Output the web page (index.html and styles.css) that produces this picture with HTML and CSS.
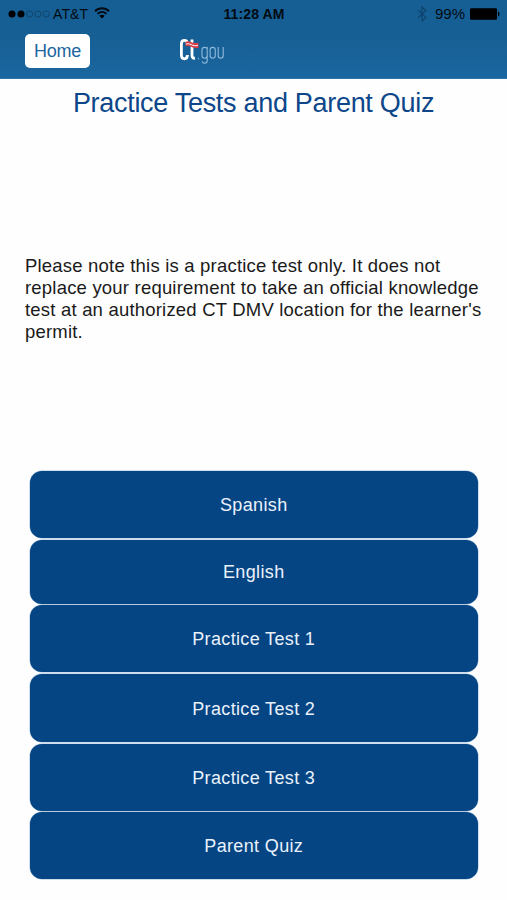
FILE: index.html
```html
<!DOCTYPE html>
<html lang="en">
<head>
    <meta charset="UTF-8">
    <title>Practice Tests and Parent Quiz</title>
    <link rel="stylesheet" href="styles.css">
</head>
<body>
    <header class="header">
        <div class="status-bar">
            <div class="status-left">
                <svg class="signal" width="42" height="10" viewBox="0 0 42 10">
                    <circle cx="4" cy="5" r="3.5"/>
                    <circle cx="13" cy="5" r="3.5"/>
                    <circle class="empty" cx="21.7" cy="5" r="3.1"/>
                    <circle class="empty" cx="30" cy="5" r="3.1"/>
                    <circle class="empty" cx="38.2" cy="5" r="3.1"/>
                </svg>
                <span class="carrier">AT&amp;T</span>
                <svg class="wifi" width="16" height="12" viewBox="0 0 16 12">
                    <path class="arc" d="M1 4.2C5 0.3 11 0.3 15 4.2"/>
                    <path class="arc" d="M3.5 6.9C6.2 4.4 9.8 4.4 12.5 6.9"/>
                    <path d="M5.3 8.8C6.9 7.4 9.1 7.4 10.7 8.8L8 11.6Z"/>
                </svg>
            </div>
            <span class="time">11:28 AM</span>
            <div class="status-right">
                <svg class="bluetooth" width="10" height="16" viewBox="0 0 10 16">
                    <path d="M1 4.2L9 11.4L5 15V1L9 4.6L1 11.8"/>
                </svg>
                <span class="percent">99%</span>
                <svg class="battery" width="30" height="12" viewBox="0 0 30 12">
                    <rect x="0" y="0.3" width="27" height="11.4" rx="1.2"/>
                    <path d="M28 3.6C30 4.2 30 7.8 28 8.4Z"/>
                </svg>
            </div>
        </div>
        <div class="nav">
            <button class="home">Home</button>
            <svg class="logo" width="48" height="30" viewBox="0 0 48 30">
                <path class="logo-bold" d="M8.4 9V7Q8.4 3.3 5.4 3.3Q2.4 3.3 2.4 7V18Q2.4 21.8 5.4 21.8Q8.4 21.8 8.4 18"/>
                <path class="logo-bold" d="M13 2.5V18.3Q13 21.5 16 21.2"/>
                <path class="flag" d="M6.5 4.8C10.5 2.4 13.5 7.8 19.5 5.5V11C13.5 12.5 10.5 7.5 6.5 9.6Z"/>
                <path class="stripe" d="M7 7.2C10.5 5.2 13.5 10.2 19 8.3"/>
                <path class="logo-thin" d="M19.5 21V22.2M28.2 12.2Q27.8 10.4 25.6 10.4Q23 10.4 23 13V18.5Q23 21.2 25.6 21.2Q28.2 21.2 28.2 18.5M28.2 10V23.5Q28.2 26.2 25.6 26.2Q23.6 26.2 23.2 24.5"/>
                <rect class="logo-thin" x="31.1" y="10.4" width="5.2" height="10.8" rx="2.6"/>
                <path class="logo-thin" d="M39.2 10V18.5Q39.2 21.2 41.7 21.2Q44.2 21.2 44.2 18.5V10"/>
            </svg>
        </div>
    </header>

    <main class="content">
        <h1 class="title">Practice Tests and Parent Quiz</h1>
        <p class="note">
            Please note this is a practice test only. It does not<br>
            replace your requirement to take an official knowledge<br>
            test at an authorized CT DMV location for the learner's<br>
            permit.
        </p>
        <div class="menu">
            <button class="menu-button">Spanish</button>
            <button class="menu-button">English</button>
            <button class="menu-button">Practice Test 1</button>
            <button class="menu-button">Practice Test 2</button>
            <button class="menu-button">Practice Test 3</button>
            <button class="menu-button">Parent Quiz</button>
        </div>
    </main>
</body>
</html>
```
FILE: styles.css
```css
* {
    box-sizing: border-box;
}
body {
    margin: 0;
    height: 900px;
    overflow: hidden;
    background-color: #fefefe;
    font-family: "Liberation Sans", Arial, sans-serif;
}
button {
    padding: 0;
    border: none;
    font-family: inherit;
}
.header {
    height: 79px;
    background: linear-gradient(#165f94 45%, #1b669f);
    border-bottom: 1px solid #2d74a8;
}
.status-bar {
    display: grid;
    grid-template-columns: 1fr auto 1fr;
    align-items: center;
    height: 28px;
    padding: 0 7px 0 8px;
    color: #020a12;
    font-size: 14px;
}
.status-left,
.status-right {
    display: flex;
    align-items: center;
}
.status-right {
    justify-content: flex-end;
}
.signal .empty {
    fill: none;
    stroke: #0c3f66;
    stroke-width: 0.8;
}
.carrier {
    margin-left: 3px;
    letter-spacing: 0.1px;
}
.wifi {
    margin: 0 0 2px 6px;
}
.wifi .arc {
    fill: none;
    stroke: #020a12;
    stroke-width: 1.9;
}
.time {
    font-weight: bold;
    letter-spacing: 0.1px;
}
.bluetooth {
    fill: none;
    stroke: #0d4169;
    stroke-width: 1.1;
}
.percent {
    margin: 0 5px 0 8px;
    font-size: 15px;
    line-height: 16px;
    padding-bottom: 1px;
}
.nav {
    display: flex;
    align-items: flex-start;
    padding: 6px 0 0 25px;
}
.home {
    width: 65px;
    height: 34px;
    padding-top: 1px;
    border-radius: 5px;
    background-color: #fff;
    color: #1b669f;
    font-size: 18px;
    letter-spacing: -0.3px;
}
.logo {
    margin: 3px 0 0 89px;
}
.logo-bold {
    fill: none;
    stroke: #fff;
    stroke-width: 2.8;
}
.logo-thin {
    fill: none;
    stroke: #8fb9da;
    stroke-width: 1.1;
}
.flag {
    fill: #d43f48;
}
.stripe {
    fill: none;
    stroke: #fff;
    stroke-width: 1;
}
.content {
    display: flex;
    flex-direction: column;
}
.title {
    height: 48px;
    margin: 0;
    color: #0d478a;
    font-size: 27px;
    font-weight: normal;
    letter-spacing: -0.3px;
    line-height: 49px;
    text-align: center;
}
.note {
    height: 216px;
    margin: 128px 0 0 25px;
    color: #1a1a1a;
    font-size: 18.5px;
    letter-spacing: 0.2px;
    line-height: 22px;
    white-space: nowrap;
}
.menu {
    display: grid;
    grid-template-rows: 67px 64px 67px 68px 67px 67px;
    gap: 1.7px;
    margin: 0 29.5px 0 30px;
}
.menu-button {
    padding-top: 2px;
    border-radius: 12px;
    background-color: #064583;
    box-shadow: 0 0 0 0.5px #9dbbd8;
    color: #e9f2fc;
    font-size: 18px;
    letter-spacing: 0.35px;
}
```
